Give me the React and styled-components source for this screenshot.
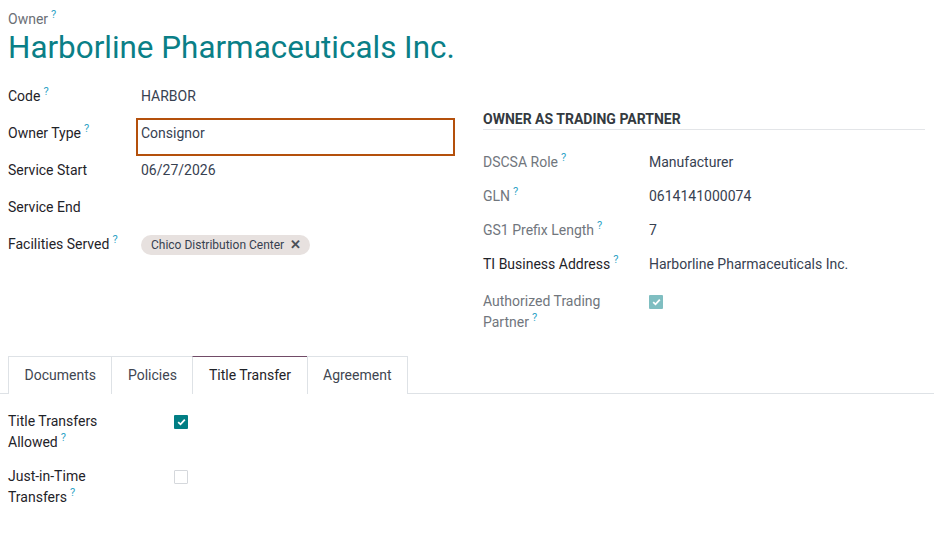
import React from "react";
import styled, { createGlobalStyle } from "styled-components";

const Global = createGlobalStyle`
  html, body { margin: 0; padding: 0; background: #ffffff; }
  body {
    font-family: Roboto, "Noto Sans", "Liberation Sans", sans-serif;
    font-size: 14px;
    color: #1f2937;
  }
`;

const Sheet = styled.div`
  padding: 9px 8px 0 8px;
  width: 934px;
  box-sizing: border-box;
`;

const OwnerLabel = styled.div`
  font-size: 14px;
  line-height: 20px;
  color: #6b6f76;
`;

const Help = styled.sup`
  font-size: 11px;
  color: #2fa3c6;
  margin-left: 3px;
  vertical-align: top;
  position: relative;
  top: 1px;
  line-height: 10px;
`;

const Title = styled.h1`
  margin: 0;
  font-weight: 400;
  font-size: 31.4px;
  line-height: 38px;
  color: #0a7f87;
`;

const Columns = styled.div`
  display: grid;
  grid-template-columns: 447px 1fr;
  column-gap: 28px;
  padding-right: 1px;
  margin-top: 10.5px;
`;

const LeftGroup = styled.div`
  display: flex;
  flex-direction: column;
`;

const FieldRow = styled.div`
  display: grid;
  grid-template-columns: 133px 1fr;
  align-items: center;
  min-height: 37px;
`;

const Label = styled.div`
  line-height: 21px;
  color: ${(p) => (p.$muted ? "#71767d" : "#1f2329")};
  padding-right: ${(p) => p.$padRight || 0}px;
`;

const Value = styled.div`
  line-height: 21px;
  color: #374151;
  position: relative;
  min-height: 21px;
  ${(p) =>
    p.$highlight &&
    `
    &::after {
      content: "";
      position: absolute;
      top: -4.5px;
      bottom: -12.5px;
      left: -5px;
      right: 0;
      border: 2px solid #b4500c;
      pointer-events: none;
    }
  `}
`;

const Chip = styled.span`
  display: inline-flex;
  align-items: center;
  gap: 6px;
  height: 20px;
  padding: 0 9px 0 10px;
  border-radius: 10px;
  background: #e7e1df;
  color: #374151;
  font-size: 12px;
  line-height: 20px;
`;

const ChipX = styled.span`
  font-size: 13px;
  font-weight: 700;
  color: #4b5058;
  line-height: 1;
`;

const RightGroup = styled.div`
  display: flex;
  flex-direction: column;
`;

const SectionHead = styled.div`
  margin-top: 31.5px;
  font-size: 14px;
  font-weight: 700;
  line-height: 20px;
  color: #343a40;
  text-transform: uppercase;
  border-bottom: 1px solid #e3e5e8;
  margin-bottom: 15px;
`;

const RightRow = styled.div`
  display: grid;
  grid-template-columns: 166px 1fr;
  align-items: start;
  padding: ${(p) => p.$padTop ?? 6.5}px 0 6.5px 0;
`;

const Box = styled.span`
  display: inline-flex;
  align-items: center;
  justify-content: center;
  width: 14px;
  height: 14px;
  box-sizing: border-box;
  border-radius: 1px;
  margin-top: ${(p) => p.$mt || 0}px;
  background: ${(p) =>
    p.$checked ? (p.$disabled ? "#7fbec1" : "#017e84") : "#ffffff"};
  border: ${(p) => (p.$checked ? "none" : "1px solid #d5d8dc")};
`;

const Notebook = styled.div`
  margin: 17px -8px 0 -8px;
`;

const TabBar = styled.div`
  display: flex;
  padding-left: 8px;
  border-bottom: 1px solid #dee2e6;
  height: 38px;
  box-sizing: border-box;
`;

const Tab = styled.div`
  height: 38px;
  box-sizing: border-box;
  padding: 0 15.5px;
  display: flex;
  align-items: center;
  line-height: 21px;
  margin-left: -1px;
  border: 1px solid #dee2e6;
  border-bottom: none;
  border-top-color: ${(p) => (p.$active ? "#714b67" : "#dee2e6")};
  background: #ffffff;
  color: ${(p) => (p.$active ? "#1f2329" : "#3f4651")};
  position: relative;
  &:first-child { margin-left: 0; }
`;

const TabBody = styled.div`
  padding: 16.5px 8px 20px 8px;
  display: flex;
  flex-direction: column;
`;

const TabRow = styled.div`
  display: grid;
  grid-template-columns: 166px 1fr;
  align-items: start;
  padding-bottom: 13px;
`;

const Check = () => (
  <svg width="9" height="8" viewBox="0 0 9 8">
    <path d="M1.2 4.2 L3.5 6.3 L7.8 1.6" stroke="#fff" strokeWidth="1.8" fill="none" />
  </svg>
);

export default function App() {
  return (
    <>
      <Global />
      <Sheet>
        <OwnerLabel>
          Owner<Help>?</Help>
        </OwnerLabel>
        <Title>Harborline Pharmaceuticals Inc.</Title>
        <Columns>
          <LeftGroup>
            <FieldRow>
              <Label>Code<Help>?</Help></Label>
              <Value>HARBOR</Value>
            </FieldRow>
            <FieldRow>
              <Label>Owner Type<Help>?</Help></Label>
              <Value $highlight>Consignor</Value>
            </FieldRow>
            <FieldRow>
              <Label>Service Start</Label>
              <Value>06/27/2026</Value>
            </FieldRow>
            <FieldRow>
              <Label>Service End</Label>
              <Value />
            </FieldRow>
            <FieldRow>
              <Label>Facilities Served<Help>?</Help></Label>
              <Value>
                <Chip>
                  Chico Distribution Center<ChipX>✕</ChipX>
                </Chip>
              </Value>
            </FieldRow>
          </LeftGroup>
          <RightGroup>
            <SectionHead>Owner as Trading Partner</SectionHead>
            <RightRow>
              <Label $muted>DSCSA Role<Help>?</Help></Label>
              <Value>Manufacturer</Value>
            </RightRow>
            <RightRow>
              <Label $muted>GLN<Help>?</Help></Label>
              <Value>0614141000074</Value>
            </RightRow>
            <RightRow>
              <Label $muted>GS1 Prefix Length<Help>?</Help></Label>
              <Value>7</Value>
            </RightRow>
            <RightRow>
              <Label>TI Business Address<Help>?</Help></Label>
              <Value>Harborline Pharmaceuticals Inc.</Value>
            </RightRow>
            <RightRow $padTop={9.5}>
              <Label $muted $padRight={40}>
                Authorized Trading Partner<Help>?</Help>
              </Label>
              <Value>
                <Box $checked $disabled $mt={4}>
                  <Check />
                </Box>
              </Value>
            </RightRow>
          </RightGroup>
        </Columns>
        <Notebook>
          <TabBar>
            <Tab>Documents</Tab>
            <Tab>Policies</Tab>
            <Tab $active>Title Transfer</Tab>
            <Tab>Agreement</Tab>
          </TabBar>
          <TabBody>
            <TabRow>
              <Label $padRight={40}>Title Transfers Allowed<Help>?</Help></Label>
              <Value>
                <Box $checked $mt={4}>
                  <Check />
                </Box>
              </Value>
            </TabRow>
            <TabRow>
              <Label $padRight={40}>Just-in-Time Transfers<Help>?</Help></Label>
              <Value>
                <Box $mt={4} />
              </Value>
            </TabRow>
          </TabBody>
        </Notebook>
      </Sheet>
    </>
  );
}
